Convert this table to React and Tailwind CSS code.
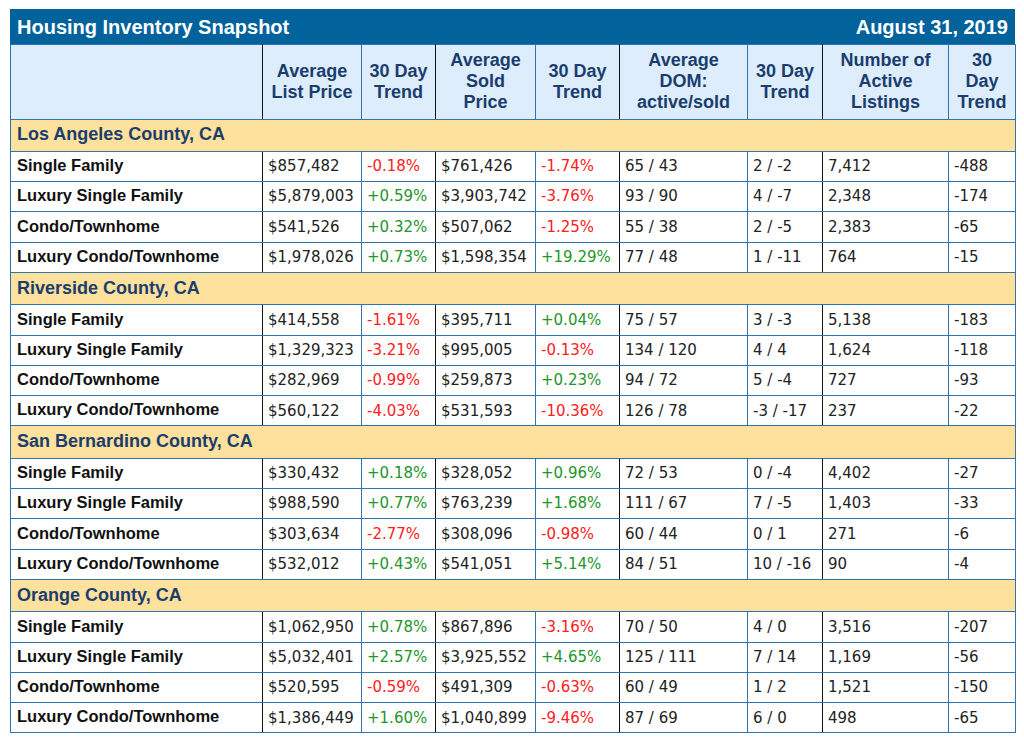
import React from 'react';

const groups = [
  {
    name: 'Los Angeles County, CA',
    rows: [
      ['Single Family', '$857,482', '-0.18%', '$761,426', '-1.74%', '65 / 43', '2 / -2', '7,412', '-488'],
      ['Luxury Single Family', '$5,879,003', '+0.59%', '$3,903,742', '-3.76%', '93 / 90', '4 / -7', '2,348', '-174'],
      ['Condo/Townhome', '$541,526', '+0.32%', '$507,062', '-1.25%', '55 / 38', '2 / -5', '2,383', '-65'],
      ['Luxury Condo/Townhome', '$1,978,026', '+0.73%', '$1,598,354', '+19.29%', '77 / 48', '1 / -11', '764', '-15']
    ]
  },
  {
    name: 'Riverside County, CA',
    rows: [
      ['Single Family', '$414,558', '-1.61%', '$395,711', '+0.04%', '75 / 57', '3 / -3', '5,138', '-183'],
      ['Luxury Single Family', '$1,329,323', '-3.21%', '$995,005', '-0.13%', '134 / 120', '4 / 4', '1,624', '-118'],
      ['Condo/Townhome', '$282,969', '-0.99%', '$259,873', '+0.23%', '94 / 72', '5 / -4', '727', '-93'],
      ['Luxury Condo/Townhome', '$560,122', '-4.03%', '$531,593', '-10.36%', '126 / 78', '-3 / -17', '237', '-22']
    ]
  },
  {
    name: 'San Bernardino County, CA',
    rows: [
      ['Single Family', '$330,432', '+0.18%', '$328,052', '+0.96%', '72 / 53', '0 / -4', '4,402', '-27'],
      ['Luxury Single Family', '$988,590', '+0.77%', '$763,239', '+1.68%', '111 / 67', '7 / -5', '1,403', '-33'],
      ['Condo/Townhome', '$303,634', '-2.77%', '$308,096', '-0.98%', '60 / 44', '0 / 1', '271', '-6'],
      ['Luxury Condo/Townhome', '$532,012', '+0.43%', '$541,051', '+5.14%', '84 / 51', '10 / -16', '90', '-4']
    ]
  },
  {
    name: 'Orange County, CA',
    rows: [
      ['Single Family', '$1,062,950', '+0.78%', '$867,896', '-3.16%', '70 / 50', '4 / 0', '3,516', '-207'],
      ['Luxury Single Family', '$5,032,401', '+2.57%', '$3,925,552', '+4.65%', '125 / 111', '7 / 14', '1,169', '-56'],
      ['Condo/Townhome', '$520,595', '-0.59%', '$491,309', '-0.63%', '60 / 49', '1 / 2', '1,521', '-150'],
      ['Luxury Condo/Townhome', '$1,386,449', '+1.60%', '$1,040,899', '-9.46%', '87 / 69', '6 / 0', '498', '-65']
    ]
  }
];

const headers = [
  [],
  ['Average', 'List Price'],
  ['30 Day', 'Trend'],
  ['Average', 'Sold', 'Price'],
  ['30 Day', 'Trend'],
  ['Average', 'DOM:', 'active/sold'],
  ['30 Day', 'Trend'],
  ['Number of', 'Active', 'Listings'],
  ['30', 'Day', 'Trend']
];

const widths = [252, 99, 74, 100, 84, 128, 75, 126, 67];

// columns whose right edge is a black rule
const blackRight = [true, false, true, false, true, false, true, false, false];

const cellBorder = (i) =>
  blackRight[i] ? 'border border-[#2f74b0] border-r-[#111]' : 'border border-[#2f74b0]';

const trendColor = (v) => {
  if (v.startsWith('+')) return 'text-[#22962a]';
  if (v.startsWith('-')) return 'text-[#ff2020]';
  return 'text-[#222]';
};

const App = () => {
  return (
    <div className="bg-white w-[1024px] h-[740px] pt-[9px] pl-[10px]">
      <div className="w-[1005px] font-['Liberation_Sans',Arial,sans-serif]">
        {/* Title bar */}
        <div className="h-[35px] bg-[#02629c] flex items-center justify-between px-[6px] text-white font-bold text-[20px] border border-[#02629c]">
          <span>Housing Inventory Snapshot</span>
          <span>August 31, 2019</span>
        </div>

        <table className="table-fixed border-collapse w-[1005px]">
          <colgroup>
            {widths.map((w, i) => (
              <col key={i} style={{ width: w }} />
            ))}
          </colgroup>
          <thead>
            <tr className="h-[74.5px] bg-[#ddedfc]">
              {headers.map((lines, i) => (
                <th
                  key={i}
                  className={`${cellBorder(i)} px-[4px] text-center align-middle font-bold text-[18px] leading-[21px] text-[#1b3d6e]`}
                >
                  {lines.map((l, j) => (
                    <div key={j}>{l}</div>
                  ))}
                </th>
              ))}
            </tr>
          </thead>
          <tbody>
            {groups.map((g) => (
              <React.Fragment key={g.name}>
                <tr className="h-[32.3px] bg-[#fde19c]">
                  <td
                    colSpan={9}
                    className="border border-[#2f74b0] px-[6px] pb-[1px] text-left font-bold text-[18px] text-[#1b3d6e]"
                  >
                    {g.name}
                  </td>
                </tr>
                {g.rows.map((row, r) => (
                  <tr key={r} className="h-[30.3px] bg-white">
                    {row.map((v, i) =>
                      i === 0 ? (
                        <td
                          key={i}
                          className={`${cellBorder(i)} px-[6px] pb-[2px] font-bold text-[16.5px] text-[#111] whitespace-nowrap`}
                        >
                          {v}
                        </td>
                      ) : (
                        <td
                          key={i}
                          className={`${cellBorder(i)} px-[5px] font-['DejaVu_Sans',Verdana,sans-serif] text-[15px] whitespace-nowrap ${
                            i === 2 || i === 4 ? trendColor(v) : 'text-[#222]'
                          }`}
                        >
                          {v}
                        </td>
                      )
                    )}
                  </tr>
                ))}
              </React.Fragment>
            ))}
          </tbody>
        </table>
      </div>
    </div>
  );
};

export default App;
